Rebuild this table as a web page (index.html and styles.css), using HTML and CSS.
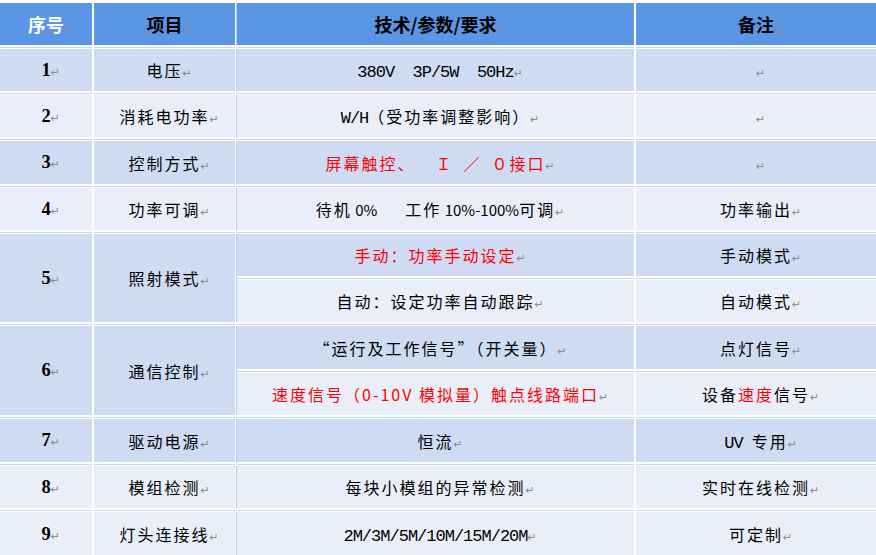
FILE: index.html
```html
<!DOCTYPE html>
<html lang="zh-CN">
<head>
<meta charset="utf-8">
<title>技术参数表</title>
<link rel="stylesheet" href="styles.css">
</head>
<body>
<div class="table">
  <div class="c hd white"><span>序号<i class="m">↵</i></span></div>
  <div class="c hd c2"><span>项目<i class="m">↵</i></span></div>
  <div class="c hd"><span>技术/参数/要求<i class="m">↵</i></span></div>
  <div class="c hd"><span>备注<i class="m">↵</i></span></div>

  <div class="c dk num"><span>1<i class="m">↵</i></span></div>
  <div class="c dk c2"><span>电压<i class="m">↵</i></span></div>
  <div class="c dk"><span><span class="en">380V  3P/5W  50Hz</span><i class="m">↵</i></span></div>
  <div class="c dk"><span><i class="m">↵</i></span></div>

  <div class="c lt num"><span>2<i class="m">↵</i></span></div>
  <div class="c lt c2"><span>消耗电功率<i class="m">↵</i></span></div>
  <div class="c lt"><span><span class="en">W/H</span>（受功率调整影响）<i class="m">↵</i></span></div>
  <div class="c lt"><span><i class="m">↵</i></span></div>

  <div class="c dk num"><span>3<i class="m">↵</i></span></div>
  <div class="c dk c2"><span>控制方式<i class="m">↵</i></span></div>
  <div class="c dk"><span><span class="red">屏幕触控、&ensp;&ensp;Ｉ&ensp;／&ensp;０接口</span><i class="m">↵</i></span></div>
  <div class="c dk"><span><i class="m">↵</i></span></div>

  <div class="c lt num"><span>4<i class="m">↵</i></span></div>
  <div class="c lt c2"><span>功率可调<i class="m">↵</i></span></div>
  <div class="c lt"><span>待机<span class="sn"> 0%</span>&emsp;&ensp;工作<span class="sn"> 10%-100%</span>可调<i class="m">↵</i></span></div>
  <div class="c lt"><span>功率输出<i class="m">↵</i></span></div>

  <div class="c dk num span2"><span>5<i class="m">↵</i></span></div>
  <div class="c dk c2 span2"><span>照射模式<i class="m">↵</i></span></div>
  <div class="c dk"><span><span class="red">手动：功率手动设定</span><i class="m">↵</i></span></div>
  <div class="c dk"><span>手动模式<i class="m">↵</i></span></div>
  <div class="c lt"><span>自动：设定功率自动跟踪<i class="m">↵</i></span></div>
  <div class="c lt"><span>自动模式<i class="m">↵</i></span></div>

  <div class="c dk num span2"><span>6<i class="m">↵</i></span></div>
  <div class="c dk c2 span2"><span>通信控制<i class="m">↵</i></span></div>
  <div class="c dk"><span>“运行及工作信号”（开关量）<i class="m">↵</i></span></div>
  <div class="c dk"><span>点灯信号<i class="m">↵</i></span></div>
  <div class="c lt"><span><span class="red">速度信号（0-10V 模拟量）触点线路端口</span><i class="m">↵</i></span></div>
  <div class="c lt"><span>设备<span class="red">速度</span>信号<i class="m">↵</i></span></div>

  <div class="c dk num"><span>7<i class="m">↵</i></span></div>
  <div class="c dk c2"><span>驱动电源<i class="m">↵</i></span></div>
  <div class="c dk"><span>恒流<i class="m">↵</i></span></div>
  <div class="c dk"><span><span class="en">UV </span>专用<i class="m">↵</i></span></div>

  <div class="c lt num"><span>8<i class="m">↵</i></span></div>
  <div class="c lt c2"><span>模组检测<i class="m">↵</i></span></div>
  <div class="c lt"><span>每块小模组的异常检测<i class="m">↵</i></span></div>
  <div class="c lt"><span>实时在线检测<i class="m">↵</i></span></div>

  <div class="c lt num last"><span>9<i class="m">↵</i></span></div>
  <div class="c lt c2 last"><span>灯头连接线<i class="m">↵</i></span></div>
  <div class="c lt last"><span><span class="en">2M/3M/5M/10M/15M/20M</span><i class="m">↵</i></span></div>
  <div class="c lt last"><span>可定制<i class="m">↵</i></span></div>
</div>
</body>
</html>
```
FILE: styles.css
```css
html, body {
  margin: 0;
  padding: 0;
  background: #ffffff;
}

body {
  font-family: "Noto Sans CJK SC", "Noto Sans", sans-serif;
  overflow: hidden;
}

.table {
  display: grid;
  grid-template-columns: 92px 141px 397px 240px;
  grid-template-rows: 42px 42px 42px 43px 42px 42px 42px 43px 42px 43px 42px 44px;
  column-gap: 2px;
  row-gap: 4px;
  padding-top: 3px;
}

.c {
  display: flex;
  align-items: center;
  justify-content: center;
  font-size: 16px;
  letter-spacing: 2px;
  color: #000000;
  white-space: nowrap;
  box-shadow: 0 2px 0 #ffffff, 0 3px 0 #c9d6f0;
}

.c2 {
  box-shadow: 0 2px 0 #ffffff, 0 3px 0 #c9d6f0, 1px 0 0 #ffffff, 2px 0 0 #b7caee;
}

.last {
  box-shadow: none;
}

.last.c2 {
  box-shadow: 1px 0 0 #ffffff, 2px 0 0 #b7caee;
}

.hd {
  background: #5b95e5;
  font-weight: 700;
  font-size: 18px;
  letter-spacing: 0;
}

.hd.white {
  color: #ffffff;
}

.dk {
  background: #cfdbf3;
}

.lt {
  background: #e9eef8;
}

.span2 {
  grid-row: span 2;
}

.num {
  font-family: "Liberation Serif", serif;
  font-weight: 700;
  font-size: 18.5px;
  letter-spacing: 0;
}

.en {
  font-family: "Liberation Mono", monospace;
  font-size: 17px;
  letter-spacing: -1px;
  white-space: pre;
}

.sn {
  letter-spacing: 0;
  font-size: 15px;
  white-space: pre;
}

.red {
  color: #ff0000;
}

.m {
  display: inline-block;
  width: 0;
  font-style: normal;
  font-weight: 400;
  font-size: 11px;
  letter-spacing: 0;
  color: #8c8c8c;
  font-family: "DejaVu Sans", sans-serif;
}
```
